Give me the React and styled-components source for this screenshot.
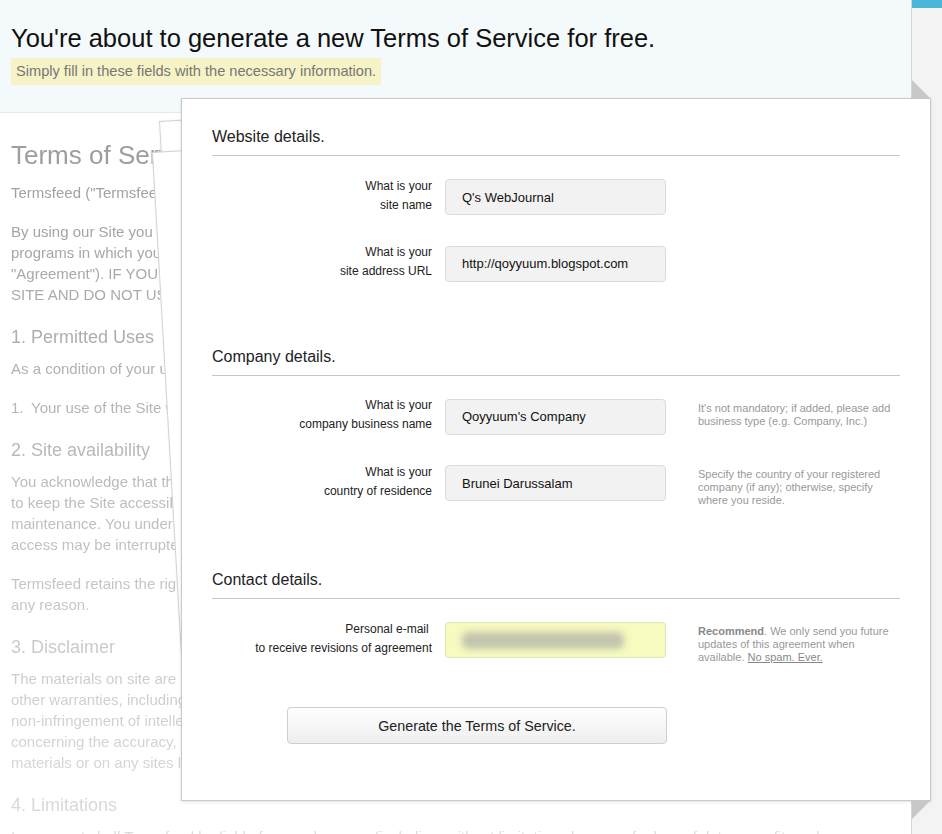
import React from 'react'
import styled, { createGlobalStyle, css } from 'styled-components'

const GlobalStyle = createGlobalStyle`
  html, body {
    margin: 0;
    padding: 0;
    background: #fff;
  }
  body {
    font-family: "Liberation Sans", Arial, sans-serif;
    color: #222;
  }
`

const Page = styled.div`
  position: relative;
  display: flex;
  height: 834px;
  overflow: hidden;
`

const Main = styled.div`
  flex: none;
  width: 911px;
  display: flex;
  flex-direction: column;
  background: #fff;
`

const Side = styled.div`
  flex: 1;
  background: #f3f3f3;
  border-left: 1px solid #d6d6d6;
`

const SideBar = styled.div`
  height: 8px;
  background: #4ab6d8;
`

const Header = styled.header`
  box-sizing: border-box;
  height: 113px;
  padding: 24px 11px 0;
  background: #f4f9fc;
  border-bottom: 1px solid #dceaf2;
`

const Title = styled.h1`
  margin: 0;
  font-size: 25.5px;
  line-height: 28px;
  font-weight: normal;
  color: #111;
`

const Lead = styled.p`
  display: inline-block;
  margin: 6px 0 0;
  padding: 0 5px;
  line-height: 27px;
  font-size: 14.6px;
  color: #777;
  background: #f6f3c6;
`

const Doc = styled.div`
  flex: 1;
  padding: 27px 11px 0;
  color: #888;
  font-size: 15px;
  line-height: 21px;
  white-space: nowrap;
  overflow: hidden;
  -webkit-mask-image: linear-gradient(to bottom, rgba(0, 0, 0, 0.85), rgba(0, 0, 0, 0.3));
  mask-image: linear-gradient(to bottom, rgba(0, 0, 0, 0.85), rgba(0, 0, 0, 0.3));
`

const DocTitle = styled.h2`
  margin: 0 0 12px;
  font-size: 26px;
  line-height: 30px;
  font-weight: normal;
`

const DocHeading = styled.h3`
  margin: 20px 0 9px;
  font-size: 18px;
  line-height: 24px;
  font-weight: normal;
`

const DocText = styled.p`
  margin: 0 0 18px;
`

const DocItem = styled.p`
  margin: 0 0 18px;

  & > span {
    display: inline-block;
    width: 20px;
  }
`

/* the dialog and the sheets of paper stacked behind it */
const DialogStack = styled.div`
  position: absolute;
  left: 181px;
  top: 98px;
  width: 750px;
  height: 703px;
`

const Paper = styled.div`
  position: absolute;
  left: ${p => p.$x}px;
  top: ${p => p.$y}px;
  width: ${p => p.$w}px;
  height: 640px;
  background: #fff;
  border: 1px solid #d2d2d2;
  box-shadow: 0 0 2px rgba(0, 0, 0, 0.08);
  transform-origin: 0 0;
  transform: rotate(${p => p.$angle}deg);
`

const Dialog = styled.section`
  position: relative;
  height: 100%;
  box-sizing: border-box;
  padding: 29px 30px 0;
  background: #fff;
  border: 1px solid #c9c9c9;
  box-shadow: 0 1px 3px rgba(0, 0, 0, 0.12);
`

const Fold = styled.div`
  position: absolute;
  right: 0;
  width: 18px;
  height: 18px;
  background: #c8c8c8;
  ${p =>
    p.$bottom
      ? css`
          bottom: -19px;
          clip-path: polygon(0 0, 100% 0, 0 100%);
        `
      : css`
          top: -19px;
          clip-path: polygon(0 0, 0 100%, 100% 100%);
        `}
`

const Section = styled.div`
  margin-top: ${p => p.$top || 0}px;
`

const SectionTitle = styled.h2`
  margin: 0 0 22px;
  padding-bottom: 9px;
  border-bottom: 1px solid #c8c8c8;
  font-size: 16px;
  line-height: 18px;
  font-weight: normal;
  color: #222;
`

const Rows = styled.div`
  display: flex;
  flex-direction: column;
  gap: 28.5px;
`

const Row = styled.div`
  display: grid;
  grid-template-columns: 220px 221px 1fr;
  grid-template-rows: 38px;
  column-gap: 13px;
  height: 38px;
  align-items: center;
`

const Label = styled.label`
  margin-top: -3px;
  font-size: 12px;
  line-height: 19px;
  text-align: right;
  color: #222;
`

const fieldBase = css`
  box-sizing: border-box;
  width: 221px;
  height: 36px;
  border: 1px solid #dadada;
  border-radius: 4px;
  background: #f2f2f2;
`

const Input = styled.input`
  ${fieldBase}
  margin: 0;
  padding: 0 16px;
  font-family: "Liberation Sans", Arial, sans-serif;
  font-size: 13px;
  color: #111;
  outline: none;
`

const EmailField = styled.div`
  ${fieldBase}
  display: flex;
  align-items: center;
  padding: 0 16px;
  background: #f8fbbf;
  border-color: #e2e4b4;
`

const Blur = styled.span`
  display: block;
  width: 162px;
  height: 17px;
  border-radius: 6px;
  background: #c2c4ae;
  filter: blur(3.5px);
`

const Note = styled.p`
  align-self: start;
  margin: 4px 0 0 19px;
  font-size: 11px;
  line-height: 13px;
  color: #999;

  & b {
    color: #888;
  }

  & a {
    color: #888;
    text-decoration: underline;
  }
`

const Submit = styled.button`
  display: block;
  box-sizing: border-box;
  width: 380px;
  height: 37px;
  margin: 48px 0 0 75px;
  border: 1px solid #cfcfcf;
  border-radius: 4px;
  background: linear-gradient(to bottom, #ffffff, #eeeeee);
  font-family: "Liberation Sans", Arial, sans-serif;
  font-size: 14.3px;
  color: #222;
  cursor: pointer;
`

function Field({ label, value, note, children }) {
  return (
    <Row>
      <Label>{label}</Label>
      {children || <Input readOnly value={value} />}
      {note ? <Note>{note}</Note> : <span />}
    </Row>
  )
}

const br = (a, b) => (
  <>
    {a}
    <br />
    {b}
  </>
)

export default function App() {
  return (
    <>
      <GlobalStyle />
      <Page>
        <Main>
          <Header>
            <Title>You're about to generate a new Terms of Service for free.</Title>
            <Lead>Simply fill in these fields with the necessary information.</Lead>
          </Header>
          <Doc>
            <DocTitle>Terms of Service</DocTitle>
            <DocText>
              Termsfeed ("Termsfeed", "we", "us") provides the Site and its services subject to the following terms.
            </DocText>
            <DocText>
              By using our Site you agree to be bound by these Terms of Service and all policies and
              <br />
              programs in which you participate, which are incorporated herein by reference (collectively, the
              <br />
              "Agreement"). IF YOU DO NOT AGREE TO ALL OF THE TERMS OF THIS AGREEMENT, PLEASE EXIT THE
              <br />
              SITE AND DO NOT USE IT.
            </DocText>
            <DocHeading>1. Permitted Uses</DocHeading>
            <DocText>As a condition of your use of the Site, you agree to the following:</DocText>
            <DocItem>
              <span>1.</span>Your use of the Site will comply with all applicable laws, rules and regulations.
            </DocItem>
            <DocHeading>2. Site availability</DocHeading>
            <DocText>
              You acknowledge that the Site may not always be available. We will use reasonable efforts
              <br />
              to keep the Site accessible, but it may be unavailable from time to time for scheduled
              <br />
              maintenance. You understand that access to the Site is not guaranteed and that your
              <br />
              access may be interrupted or suspended at any time without notice.
            </DocText>
            <DocText>
              Termsfeed retains the right to modify, suspend or discontinue the Site at any time for
              <br />
              any reason.
            </DocText>
            <DocHeading>3. Disclaimer</DocHeading>
            <DocText>
              The materials on site are provided "as is". Termsfeed makes no warranties, expressed or implied, and
              <br />
              other warranties, including without limitation, implied warranties or conditions of merchantability,
              <br />
              non-infringement of intellectual property or other violation of rights. Termsfeed does not warrant
              <br />
              concerning the accuracy, likely results, or reliability of the use of the materials on its site or
              <br />
              materials or on any sites linked to this site.
            </DocText>
            <DocHeading>4. Limitations</DocHeading>
            <DocText>
              In no event shall Termsfeed be liable for any damages (including, without limitation, damages for loss of data or profit, or due
            </DocText>
          </Doc>
        </Main>
        <Side>
          <SideBar />
        </Side>

        <DialogStack>
          <Paper $x={-22} $y={23} $w={300} $angle={-3.3} />
          <Paper $x={-29} $y={54} $w={560} $angle={-3.3} />
          <Dialog>
            <Fold />
            <Fold $bottom />

            <Section>
              <SectionTitle>Website details.</SectionTitle>
              <Rows>
                <Field label={br('What is your', 'site name')} value="Q's WebJournal" />
                <Field label={br('What is your', 'site address URL')} value="http://qoyyuum.blogspot.com" />
              </Rows>
            </Section>

            <Section $top={65}>
              <SectionTitle>Company details.</SectionTitle>
              <Rows>
                <Field
                  label={br('What is your', 'company business name')}
                  value="Qoyyuum's Company"
                  note={br("It's not mandatory; if added, please add", 'business type (e.g. Company, Inc.)')}
                />
                <Field
                  label={br('What is your', 'country of residence')}
                  value="Brunei Darussalam"
                  note={
                    <>
                      Specify the country of your registered
                      <br />
                      company (if any); otherwise, specify
                      <br />
                      where you reside.
                    </>
                  }
                />
              </Rows>
            </Section>

            <Section $top={69}>
              <SectionTitle>Contact details.</SectionTitle>
              <Rows>
                <Field
                  label={br('Personal e-mail\u00a0', 'to receive revisions of agreement')}
                  note={
                    <>
                      <b>Recommend</b>. We only send you future
                      <br />
                      updates of this agreement when
                      <br />
                      available. <a>No spam. Ever.</a>
                    </>
                  }
                >
                  <EmailField>
                    <Blur />
                  </EmailField>
                </Field>
              </Rows>
            </Section>

            <Submit type="button">Generate the Terms of Service.</Submit>
          </Dialog>
        </DialogStack>
      </Page>
    </>
  )
}
